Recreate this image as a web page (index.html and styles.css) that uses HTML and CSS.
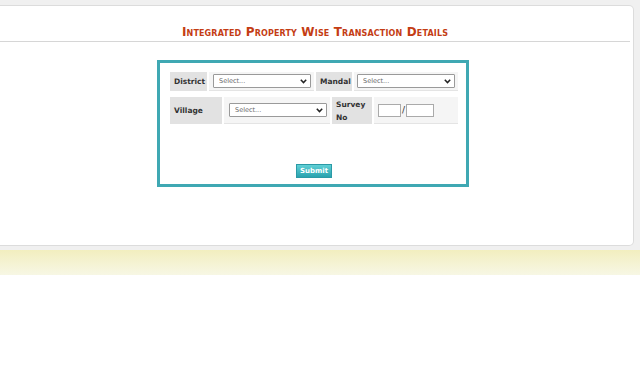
FILE: index.html
```html
<!DOCTYPE html>
<html lang="en">
<head>
    <meta charset="UTF-8">
    <meta name="viewport" content="width=device-width, initial-scale=1.0">
    <title>Integrated Property Wise Transaction Details</title>
    <link rel="stylesheet" href="styles.css">
</head>
<body>

    <!-- main panel -->
    <div class="shell">
        <div class="panel">
            <h1 class="title">Integrated Property Wise Transaction Details</h1>

            <form class="frame" id="search-form">
                <div class="row row-one">
                    <div class="cell label w-district">District</div>
                    <div class="cell field w-district-f">
                        <span class="select-wrap s-row1">
                            <select><option>Select...</option></select>
                            <svg class="chev" width="7" height="5" viewBox="0 0 7 5"><path d="M0.8 0.8 L3.5 3.6 L6.2 0.8" fill="none" stroke="#222" stroke-width="1.5"/></svg>
                        </span>
                    </div>
                    <div class="cell label w-mandal">Mandal</div>
                    <div class="cell field w-mandal-f">
                        <span class="select-wrap s-row1">
                            <select><option>Select...</option></select>
                            <svg class="chev" width="7" height="5" viewBox="0 0 7 5"><path d="M0.8 0.8 L3.5 3.6 L6.2 0.8" fill="none" stroke="#222" stroke-width="1.5"/></svg>
                        </span>
                    </div>
                </div>

                <div class="row row-two">
                    <div class="cell label w-village">Village</div>
                    <div class="cell field w-village-f">
                        <span class="select-wrap s-row2">
                            <select><option>Select...</option></select>
                            <svg class="chev" width="7" height="5" viewBox="0 0 7 5"><path d="M0.8 0.8 L3.5 3.6 L6.2 0.8" fill="none" stroke="#222" stroke-width="1.5"/></svg>
                        </span>
                    </div>
                    <div class="cell label w-survey">Survey<br>No</div>
                    <div class="cell field w-survey-f">
                        <input type="text" class="survey-a">
                        <span class="slash">/</span>
                        <input type="text" class="survey-b">
                    </div>
                </div>

                <div class="actions">
                    <button type="submit" class="submit">Submit</button>
                </div>
            </form>
        </div>
    </div>

    <!-- yellow strip -->
    <div class="band"></div>

</body>
</html>
```

FILE: styles.css
```css
body { margin: 0; background: #fff; font-family: "DejaVu Sans", Verdana, sans-serif; }

.shell { background: #f0f0f0; padding: 5px 6px 4px 0; }
.panel {
    background: #fff;
    border: 1px solid #dcdcdc;
    border-left: none;
    border-radius: 0 5px 5px 0;
    height: 239px;
    padding-right: 7px;
}

.title {
    margin: 0 -4px 0 0;
    padding: 18px 0 1px;
    line-height: 16px;
    font-size: 12px;
    letter-spacing: 0.15px;
    font-weight: bold;
    font-variant: small-caps;
    color: #c43d14;
    text-align: center;
    border-bottom: 1px solid #d6d6d6;
}

/* form box */
.frame {
    box-sizing: border-box;
    width: 312px;
    height: 127px;
    margin: 18px auto 0;
    padding: 9px 8px 6px 10px;
    border: 3px solid #3fa8b3;
    display: flex;
    flex-direction: column;
}

.row { display: flex; gap: 2px; }
.row-one { height: 19px; }
.row-two { height: 27px; margin-top: 6px; }

.cell { box-sizing: border-box; display: flex; align-items: center; }
.label {
    background: #e2e2e2;
    font-size: 7.5px;
    font-weight: bold;
    color: #333;
    padding-left: 4px;
    line-height: 13px;
}
.field { background: #f5f5f5; border-bottom: 1px solid #e4e4e4; }

.w-district { width: 37px; }
.w-district-f { width: 105px; padding-left: 4px; }
.w-mandal { width: 36px; }
.w-mandal-f { width: 104px; padding-left: 3px; }
.w-village { width: 52px; }
.w-village-f { width: 106px; padding-left: 5px; }
.w-survey { width: 40px; padding-left: 4px; }
.w-survey-f { width: 84px; padding-left: 4px; }

/* select boxes */
.select-wrap { position: relative; display: block; }
.select-wrap select {
    appearance: none;
    -webkit-appearance: none;
    display: block;
    width: 98px;
    height: 14px;
    margin: 0;
    padding: 0 0 0 5px;
    border: 1px solid #9a9a9a;
    border-radius: 1px;
    background: #fff;
    font-family: "DejaVu Sans", Verdana, sans-serif;
    font-size: 6.5px;
    color: #666;
}
.chev { position: absolute; right: 4px; top: 5px; }

/* survey number inputs */
.survey-a, .survey-b {
    box-sizing: border-box;
    height: 13px;
    margin: 0;
    padding: 0;
    border: 1px solid #aaa;
    background: #fff;
}
.survey-a { width: 23px; }
.survey-b { width: 28px; }
.slash { font-size: 9px; color: #333; width: 5px; text-align: center; line-height: 13px; }

/* submit */
.actions { margin-top: auto; text-align: center; }
.submit {
    box-sizing: border-box;
    width: 36px;
    height: 14px;
    padding: 0;
    border: 1px solid #2b9aa6;
    background: linear-gradient(#5fd0d6, #2aa2ae);
    color: #fff;
    font-family: "DejaVu Sans", Verdana, sans-serif;
    font-size: 7px;
    font-weight: bold;
    cursor: pointer;
}

.band {
    height: 25px;
    background: linear-gradient(#f2eebf, #f7f7e4);
}
```
